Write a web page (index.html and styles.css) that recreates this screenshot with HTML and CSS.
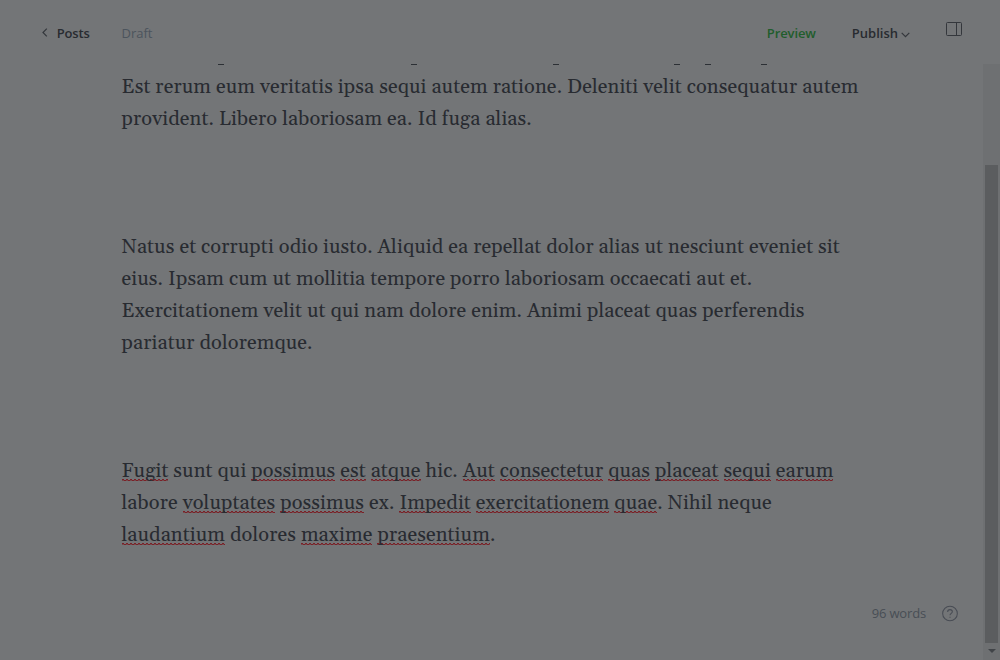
FILE: index.html
```html
<!DOCTYPE html>
<html lang="en">
<head>
<meta charset="utf-8">
<title>Editor</title>
<link rel="stylesheet" href="styles.css">
</head>
<body>
<div class="editor">
  <header class="topbar">
    <a class="back"><svg class="chev-left" viewBox="0 0 6 9"><path d="M4.8 .7 1 4.5l3.8 3.8"/></svg>Posts</a>
    <span class="status">Draft</span>
    <span class="preview">Preview</span>
    <span class="publish">Publish<svg class="chev-down" viewBox="0 0 9 6"><path d="M.7 .8 4.5 4.6 8.3 .8"/></svg></span>
    <svg class="panel-icon" viewBox="0 0 16 14"><rect x=".5" y=".5" width="15" height="13" rx="1"/><path d="M10.5 1v12"/></svg>
  </header>
  <div class="body">
    <main class="content">
      <div class="clipped"><i></i><i></i><i></i><i></i><i></i><i></i></div>
      <p><span class="line">Est rerum eum veritatis ipsa sequi autem ratione. Deleniti velit consequatur autem</span><span class="line">provident. Libero laboriosam ea. Id fuga alias.</span></p>
      <p><span class="line">Natus et corrupti odio iusto. Aliquid ea repellat dolor alias ut nesciunt eveniet sit</span><span class="line">eius. Ipsam cum ut mollitia tempore porro laboriosam occaecati aut et.</span><span class="line">Exercitationem velit ut qui nam dolore enim. Animi placeat quas perferendis</span><span class="line">pariatur doloremque.</span></p>
      <p><span class="line"><u>Fugit</u> sunt qui <u>possimus</u>&nbsp;<u>est</u>&nbsp;<u>atque</u> hic. <u>Aut</u>&nbsp;<u>consectetur</u>&nbsp;<u>quas</u>&nbsp;<u>placeat</u>&nbsp;<u>sequi</u>&nbsp;<u>earum</u></span><span class="line">labore <u>voluptates</u>&nbsp;<u>possimus</u> ex. <u>Impedit</u>&nbsp;<u>exercitationem</u>&nbsp;<u>quae</u>. Nihil neque</span><span class="line"><u>laudantium</u> dolores <u>maxime</u>&nbsp;<u>praesentium</u>.</span></p>
    </main>
    <aside class="scrollbar"><div class="thumb"></div><div class="arrow"></div></aside>
  </div>
  <footer class="footer"><span>96 words</span><svg class="help" viewBox="0 0 17 17"><circle cx="8.5" cy="8.5" r="7.8"/><path d="M6 6.8C6 5.3 7 4.4 8.5 4.4S11 5.3 11 6.7c0 1.7-2.5 1.7-2.5 3.7M8.5 12v1"/></svg></footer>
</div>
</body>
</html>
```
FILE: styles.css
```css
* { box-sizing: border-box; }
body { margin: 0; background: #737577; font-family: "Open Sans", "Noto Sans", sans-serif; font-size: 13px; color: #282b30; overflow: hidden; }
.editor { position: relative; display: flex; flex-direction: column; height: 660px; }
.topbar { display: flex; align-items: center; height: 64px; padding: 2px 38px 0 42px; line-height: 18px; }
.back { display: flex; align-items: center; width: 48px; font-weight: 600; letter-spacing: -.14px; }
.chev-left { width: 6px; height: 9px; margin: 0 8.7px 2px 0; }
.status { margin-left: 31.5px; color: #4c545d; }
.preview { margin-left: auto; color: #215d2c; font-weight: 600; letter-spacing: -.1px; }
.publish { margin-left: 36px; font-weight: 600; }
.chev-down { width: 9px; height: 6px; margin-left: 3px; }
svg { fill: none; stroke: #34373c; stroke-width: 1.2; }
.panel-icon { width: 16px; height: 14px; margin: -9px 0 0 36px; stroke-width: 1; }
.body { display: flex; flex: 1; }
.content { flex: 1; padding-left: 121.5px; font: 20px/32px Gelasio, Georgia, "Liberation Serif", serif; letter-spacing: .1px; color: #282b31; }
/* Descenders of the line scrolled under the top bar */
.clipped { display: flex; height: 7px; }
.clipped i { width: 6px; height: 1px; background: #2c3035; margin-left: 96px; }
.clipped i:nth-child(2) { margin-left: 187px; }
.clipped i:nth-child(3) { margin-left: 136px; }
.clipped i:nth-child(4) { margin-left: 115px; }
.clipped i:nth-child(5) { margin-left: 25px; }
.clipped i:nth-child(6) { margin-left: 50px; }
p { margin: 0 0 96px; }
.line { display: block; height: 32px; white-space: nowrap; }
u {
  display: inline-block;
  text-decoration: none;
  background:
    linear-gradient(90deg, #7b2027 50%, transparent 50%) 0 24px / 4px 1px repeat-x,
    linear-gradient(90deg, #74484b 25%, #7b2027 25%, #7b2027 75%, #74484b 75%) 1px 25px / 4px 1px repeat-x;
}
.scrollbar { display: flex; flex-direction: column; align-items: center; width: 17px; padding-top: 101px; background: #6e7072; }
.thumb { width: 13px; height: 478px; background: #5b5d5f; }
.arrow { margin-top: 6px; border: 4px solid transparent; border-top-color: #414448; border-bottom: 0; }
.footer { position: absolute; right: 42px; bottom: 38px; display: flex; align-items: center; gap: 16px; color: #484e55; letter-spacing: -.16px; }
.help { width: 16px; height: 17px; stroke: #484c54; stroke-width: 1.1; }
```
